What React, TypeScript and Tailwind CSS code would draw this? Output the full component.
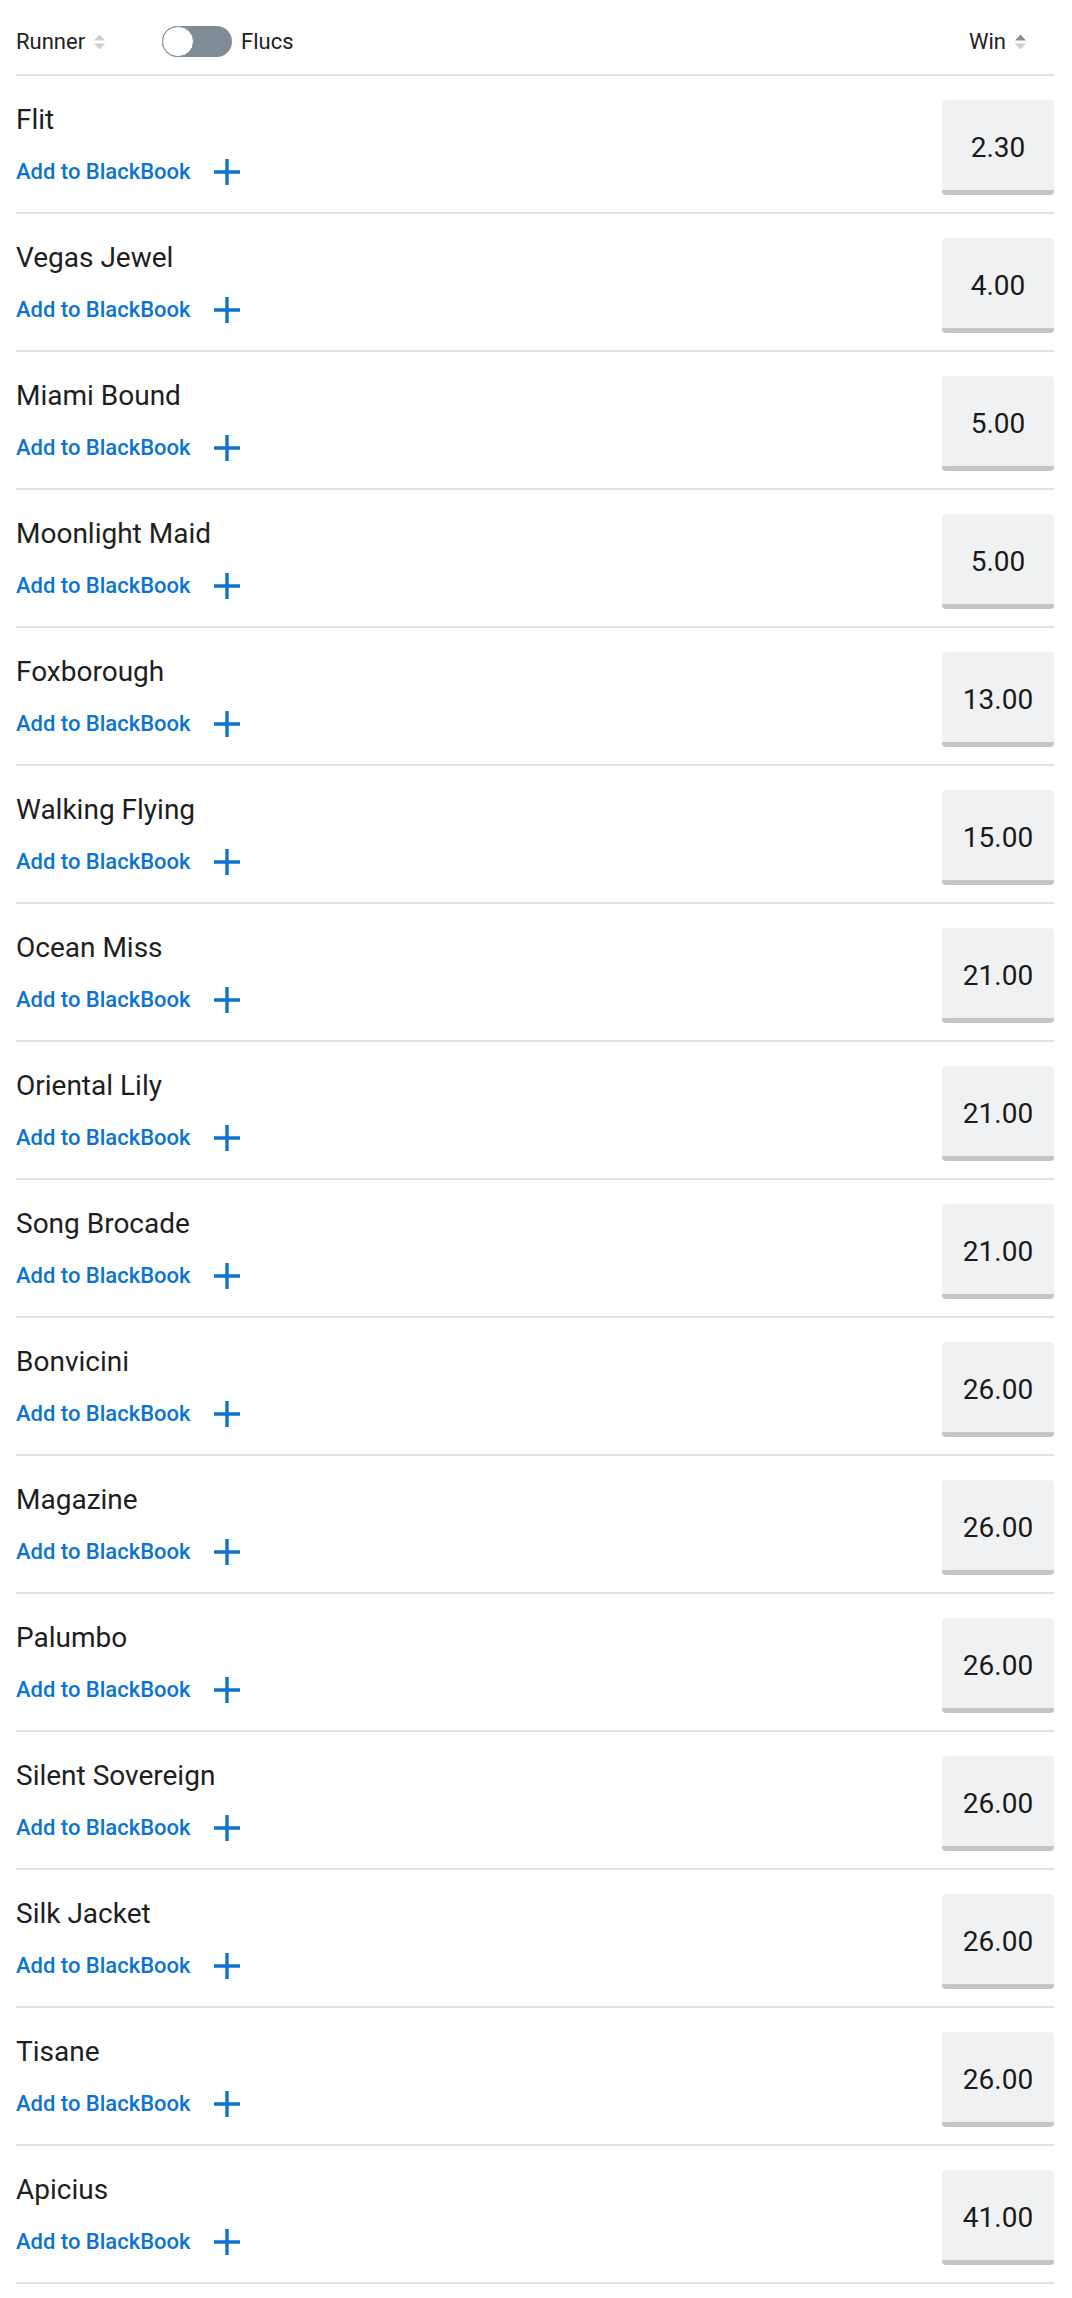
import React from "react";

const runners: [string, string][] = [
  ["Flit", "2.30"],
  ["Vegas Jewel", "4.00"],
  ["Miami Bound", "5.00"],
  ["Moonlight Maid", "5.00"],
  ["Foxborough", "13.00"],
  ["Walking Flying", "15.00"],
  ["Ocean Miss", "21.00"],
  ["Oriental Lily", "21.00"],
  ["Song Brocade", "21.00"],
  ["Bonvicini", "26.00"],
  ["Magazine", "26.00"],
  ["Palumbo", "26.00"],
  ["Silent Sovereign", "26.00"],
  ["Silk Jacket", "26.00"],
  ["Tisane", "26.00"],
  ["Apicius", "41.00"],
];

function SortIcon({ active }: { active?: boolean }) {
  return (
    <svg width="13" height="18" viewBox="0 0 13 18" className="ml-[8px]">
      <path d="M1 7.5 L6.5 1.5 L12 7.5 Z" fill={active ? "#8c8c8c" : "#cfcfcf"} />
      <path d="M1 10.5 L6.5 16.5 L12 10.5 Z" fill="#cfcfcf" />
    </svg>
  );
}

function Plus() {
  return (
    <svg width="26" height="26" viewBox="0 0 26 26" className="ml-[23px]">
      <path d="M13 0 V26 M0 13 H26" stroke="#0b74d0" strokeWidth="3.4" />
    </svg>
  );
}

export default function App() {
  return (
    <div
      className="bg-white w-[1072px] min-h-[2298px] pl-[16px] pr-[18px] text-[#1c1c1c]"
      style={{ fontFamily: "Roboto, 'Noto Sans', sans-serif" }}
    >
      <div className="flex items-center pt-[26px] pb-[17px] border-b-2 border-[#e3e3e3]">
        <div className="flex items-center text-[22px] leading-[26px] text-[#222]">
          Runner
          <SortIcon />
        </div>
        <div className="ml-[56px] w-[70px] h-[31px] rounded-full bg-[#7f8c98] relative">
          <div className="absolute left-0 top-0 w-[32px] h-[31px] rounded-full bg-white border-[1.5px] border-[#7f8c98]" />
        </div>
        <div className="ml-[9px] text-[22px] leading-[26px] text-[#222]">Flucs</div>
        <div className="ml-auto w-[112px] flex items-center justify-center text-[22px] leading-[26px] text-[#222]">
          Win
          <SortIcon active />
        </div>
      </div>
      {runners.map(([name, odds]) => (
        <div key={name} className="flex items-start border-b-2 border-[#e3e3e3]">
          <div className="flex flex-col pt-[28px] pb-[27px]">
            <div className="text-[28px] leading-[32px] text-[#1e1e1e]">{name}</div>
            <div className="mt-[23px] flex items-center h-[26px]">
              <span className="text-[22px] leading-[26px] font-medium text-[#0b74d0]">Add to BlackBook</span>
              <Plus />
            </div>
          </div>
          <div className="ml-auto mt-[24px] w-[112px] h-[95px] pt-[6px] rounded-[4px] bg-[#f0f1f3] border-b-[5px] border-[#c4c6c6] flex items-center justify-center text-[28px] leading-[32px] text-[#1a1a1a]">
            {odds}
          </div>
        </div>
      ))}
    </div>
  );
}
